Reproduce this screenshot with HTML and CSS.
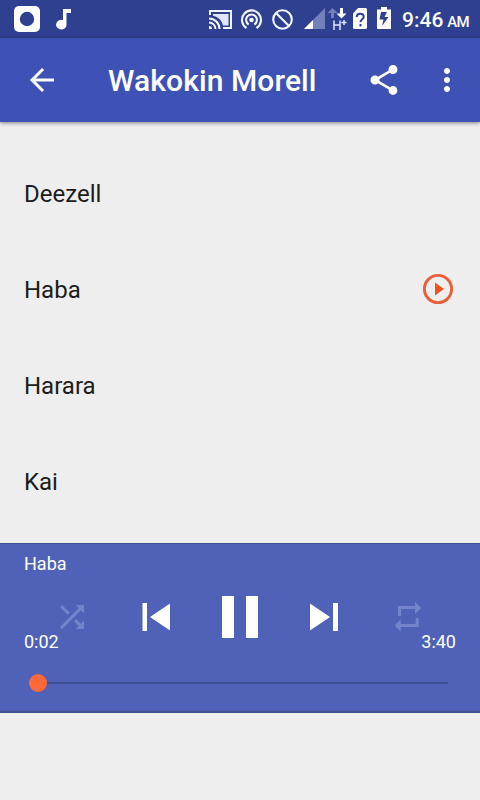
FILE: index.html
```html
<!DOCTYPE html>
<html lang="en">
<head>
<meta charset="utf-8">
<title>Wakokin Morell</title>
<link rel="stylesheet" href="styles.css">
</head>
<body>
<div class="screen">
  <div class="status">
    <svg class="s-app" viewBox="14 0 26 38"><rect x="14" y="6" width="26" height="26" rx="5" fill="#fff"/><circle cx="27" cy="19" r="7.200" fill="#2f4090"/></svg>
    <svg class="s-note" viewBox="55 0 17 38"><path d="M63 9h8v4h-4.500v11.500a5.200 4.800 0 1 1-3.500-4.400z" fill="#fff"/></svg>
    <svg class="s-cast" viewBox="208 0 25 38" fill="none" stroke="#f1f6ff" stroke-width="2"><path d="M210 15v-4h21v17h-8"/><path d="M213 14h15.500v11.500h-5.500c-1-5-5-9-10-9.800z" fill="#dfe6fa" stroke="none"/><path d="M209 18.500a10.500 10.500 0 0 1 10.500 10.500M209 22.500a6.500 6.500 0 0 1 6.500 6.500"/><path d="M209 26a3 3 0 0 1 3 3h-3z" fill="#fff" stroke="none"/></svg>
    <svg class="s-hot" viewBox="240 0 24 38" fill="none" stroke="#f1f6ff" stroke-width="2.100"><path d="M246.500 28a9.500 9.500 0 1 1 10 0M248.700 24.500a5.400 5.400 0 1 1 5.600 0"/><circle cx="251.500" cy="20" r="2.300" fill="#f1f6ff" stroke="none"/></svg>
    <svg class="s-block" viewBox="271 0 23 38" fill="none" stroke="#f1f6ff" stroke-width="2.100"><circle cx="282.500" cy="19.500" r="9.300"/><path d="M276 13l13 13"/></svg>
    <svg class="s-signal" viewBox="304 0 22 38"><path d="M304 29L325 8v21z" fill="#7480ba"/><path d="M304 29l9-9v9z" fill="#fff"/></svg>
    <svg class="s-data" viewBox="327 0 21 38"><path d="M332.500 8l5 5h-3.500v5h-3v-5h-3.500z" fill="#7480ba"/><path d="M340 8h3v5.500h3.500l-5 5-5-5h3.500z" fill="#fff"/><path d="M334 20.500v9.500M340 20.500v9.500M334 25h6M341.500 22.500h5M344 20v5" stroke="#dce5ff" stroke-width="1.500" fill="none"/></svg>
    <svg class="s-sim" viewBox="353 0 15 38"><path d="M358 8h7.500q1.500 0 1.500 1.500v18q0 1.500-1.500 1.500h-11q-1.500 0-1.500-1.500v-14z" fill="#fff"/><path d="M356.700 17c0-4.500 7-4.500 7 0 0 2.300-3.200 2.300-3.200 5.200M360.500 24v2.400" fill="none" stroke="#2f4090" stroke-width="2"/></svg>
    <svg class="s-batt" viewBox="377 0 14 38"><path d="M381 7h6v2.500h4V29h-14V9.500h4z" fill="#fff"/><path d="M381 12h6l-2.500 5h4l-6.500 9 1.500-6.500h-4z" fill="#2f4090"/></svg>
    <div class="clock">9:46<span class="ampm">AM</span></div>
  </div>
  <div class="appbar">
    <svg class="i36" viewBox="0 0 24 24"><path d="M20 11H7.830l5.590-5.590L12 4l-8 8 8 8 1.410-1.410L7.830 13H20z"/></svg>
    <h1 class="title">Wakokin Morell</h1>
    <svg class="i36 share" viewBox="0 0 24 24"><path d="M18 16.080c-.76 0-1.440.3-1.960.77L8.910 12.700c.05-.23.09-.46.09-.7s-.04-.47-.09-.7l7.050-4.110c.54.5 1.250.81 2.040.81 1.660 0 3-1.340 3-3s-1.340-3-3-3-3 1.340-3 3c0 .24.040.47.090.7L8.040 9.810C7.500 9.310 6.790 9 6 9c-1.660 0-3 1.340-3 3s1.340 3 3 3c.79 0 1.500-.31 2.040-.81l7.120 4.160c-.05.21-.08.43-.08.65 0 1.610 1.310 2.920 2.920 2.920s2.920-1.310 2.920-2.920-1.310-2.920-2.920-2.920z"/></svg>
    <svg class="i36" viewBox="0 0 24 24"><path d="M12 8c1.100 0 2-.9 2-2s-.9-2-2-2-2 .9-2 2 .9 2 2 2zm0 2c-1.100 0-2 .9-2 2s.9 2 2 2 2-.9 2-2-.9-2-2-2zm0 6c-1.100 0-2 .9-2 2s.9 2 2 2 2-.9 2-2-.9-2-2-2z"/></svg>
  </div>
  <div class="list">
    <div class="row">Deezell</div>
    <div class="row">Haba
      <svg class="i36" viewBox="0 0 36 36"><circle cx="18" cy="17" r="13.600" fill="none" stroke="#e8603a" stroke-width="2.900"/><path d="M15 10.500v13l9-6.500z" fill="#ea5420"/></svg>
    </div>
    <div class="row">Harara</div>
    <div class="row">Kai</div>
  </div>
  <div class="player">
    <div class="track">Haba</div>
    <div class="controls">
      <svg viewBox="0 0 24 24" class="i36 dim"><path d="M10.590 9.170L5.410 4 4 5.410l5.170 5.170 1.420-1.410zM14.500 4l2.040 2.040L4 18.590 5.410 20 17.960 7.460 20 9.500V4h-5.500zm.33 9.410l-1.410 1.410 3.130 3.130L14.500 20H20v-5.500l-2.040 2.040-3.130-3.130z"/></svg>
      <svg viewBox="0 0 36 36" class="i36"><path d="M4.500 4h4.500v28H4.500zM32 4.500v27L12 18z"/></svg>
      <svg viewBox="0 0 72 72" class="i72"><path d="M18 15h12v42H18zM42 15h12v42H42z"/></svg>
      <svg viewBox="0 0 36 36" class="i36"><path d="M4 4.500v27L24 18zM27 4h5v28h-5z"/></svg>
      <svg viewBox="390 599 36 36" class="i36 dim"><path d="M398 616v-10h17v-4l6.300 6-6.300 6v-5h-14v7zM418.700 618v9h-18v4.500l-6-6 6-6v4.500h15v-6z"/></svg>
    </div>
    <div class="times"><span>0:02</span><span>3:40</span></div>
    <div class="seek"><div class="thumb"></div><div class="line"></div></div>
  </div>
</div>
</body>
</html>
```
FILE: styles.css
```css
body {
  margin: 0;
  background: #eee;
  font-family: Roboto, "Liberation Sans", sans-serif;
}
svg {
  display: block;
  flex: none;
}
.screen {
  width: 480px;
  height: 800px;
  overflow: hidden;
}
.status {
  display: flex;
  height: 38px;
  background: #2f4090;
}
.status svg { height: 38px; }
.s-app { width: 26px; margin-left: 14px; }
.s-note { width: 17px; margin-left: 15px; }
.s-cast { width: 25px; margin-left: 136px; }
.s-hot { width: 24px; margin-left: 7px; }
.s-block { width: 23px; margin-left: 7px; }
.s-signal { width: 22px; margin-left: 10px; }
.s-data { width: 21px; margin-left: 1px; }
.s-sim { width: 15px; margin-left: 5px; }
.s-batt { width: 14px; margin-left: 9px; }
.clock {
  margin-left: 11px;
  color: #fff;
  font-size: 21px;
  font-weight: 500;
  line-height: 40px;
  white-space: nowrap;
}
.ampm {
  margin-left: 4px;
  font-size: 15px;
  letter-spacing: -.8px;
}
.appbar {
  display: flex;
  align-items: center;
  box-sizing: border-box;
  height: 84px;
  padding: 0 15px 0 24px;
  background: #3e51b4;
  box-shadow: 0 1px 4px rgba(0, 0, 0, .45);
}
.i36 {
  width: 36px;
  height: 36px;
  fill: #fff;
}
.title {
  flex: 1;
  margin: 2px 0 0 48px;
  color: #fff;
  font-size: 30px;
  font-weight: 500;
  line-height: 36px;
  letter-spacing: .1px;
  white-space: nowrap;
}
.share { margin-right: 27px; }
.list {
  height: 397px;
  padding-top: 24px;
}
.row {
  display: flex;
  align-items: center;
  justify-content: space-between;
  height: 96px;
  padding: 0 24px;
  color: #1c1c1c;
  font-size: 24px;
}
.player {
  box-sizing: border-box;
  height: 170px;
  padding: 0 24px;
  background: #4f62b8;
  border-top: 1px solid #435091;
  border-bottom: 2px solid #414f91;
  color: #fff;
  font-size: 18px;
}
.track {
  padding-top: 9px;
  line-height: 22px;
}
.controls {
  display: grid;
  grid-template-columns: repeat(5, 84px);
  place-items: center;
  height: 72px;
  margin: 6px 6px 0;
}
.i72 {
  width: 72px;
  height: 72px;
  fill: #fff;
}
.dim { fill: #7384cc; }
.times {
  display: flex;
  justify-content: space-between;
  margin-top: -22px;
  line-height: 22px;
}
.seek {
  display: flex;
  align-items: center;
  height: 18px;
  margin: 21px 8px 0 5px;
}
.thumb {
  width: 18px;
  height: 18px;
  border-radius: 50%;
  background: #ff6838;
}
.line {
  flex: 1;
  height: 2px;
  background: #3f4f93;
}
```
